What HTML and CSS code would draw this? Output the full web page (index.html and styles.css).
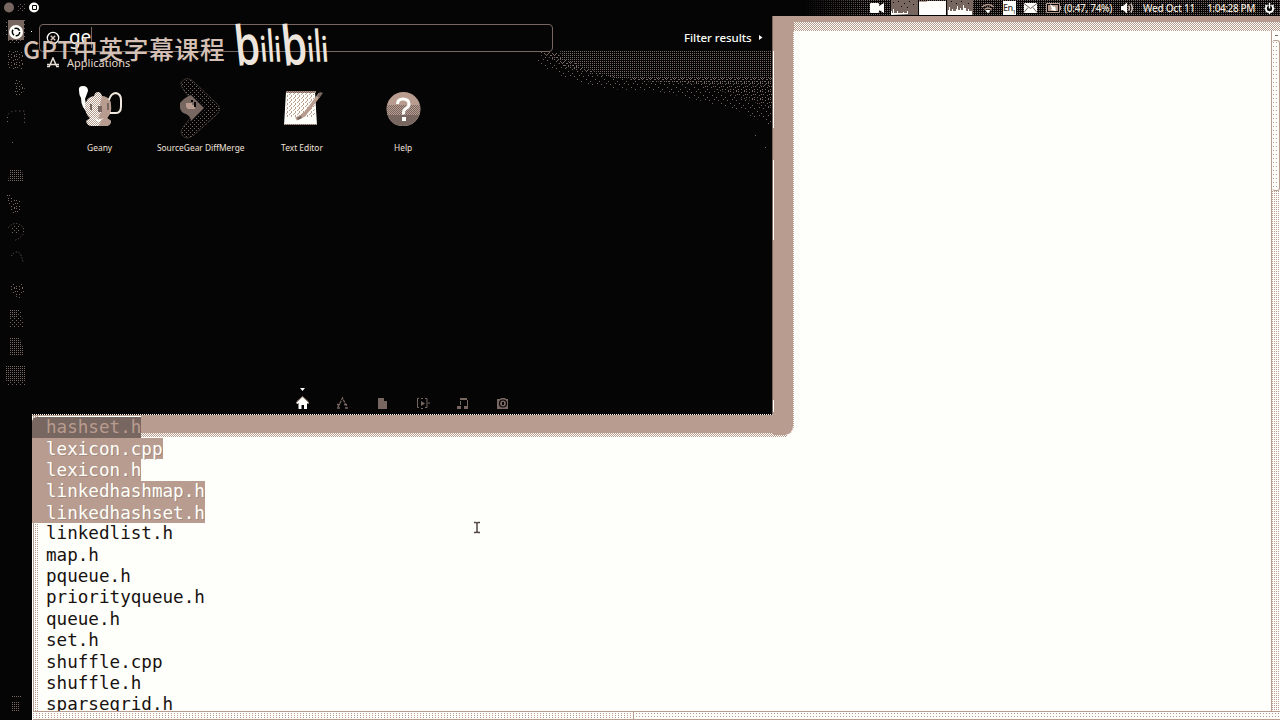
FILE: index.html
```html
<!DOCTYPE html>
<html lang="en">
<head>
<meta charset="utf-8">
<title>Desktop</title>
<link rel="stylesheet" href="styles.css">
</head>
<body>
<svg class="defs" width="0" height="0" aria-hidden="true">
  <defs>
    <pattern id="dots" width="2" height="2" patternUnits="userSpaceOnUse"><path fill="#786661" d="M0 0h1v1H0z"/></pattern>
    <pattern id="mid" width="4" height="4" patternUnits="userSpaceOnUse"><path fill="#786661" d="M0 0h1v1H0zM2 2h1v1H2z"/></pattern>
    <pattern id="mix" width="8" height="8" patternUnits="userSpaceOnUse"><path fill="#786661" d="M0 0h1v1H0zM3 1h1v1H3zM6 0h1v1H6zM1 3h1v1H1zM5 4h1v1H5zM7 3h1v1H7zM0 6h1v1H0zM3 6h1v1H3zM6 7h1v1H6z"/></pattern>
    <pattern id="sparse" width="9" height="8" patternUnits="userSpaceOnUse"><path fill="#786661" d="M0 1h1v1H0zM5 0h1v1H5zM3 4h1v1H3zM7 6h1v1H7z"/></pattern>
    <pattern id="tan" width="2" height="2" patternUnits="userSpaceOnUse"><path fill="#fefffa" d="M0 0h2v2H0z"/><path fill="#b89c8f" d="M0 0h1v1H0zM1 1h1v1H1z"/></pattern>
    <pattern id="paper" width="4" height="4" patternUnits="userSpaceOnUse"><path fill="#fefffa" d="M0 0h4v4H0z"/><path fill="#b89c8f" d="M0 0h1v1H0zM2 1h1v2H2zM1 3h1v1H1z"/></pattern>
    <pattern id="shade" width="2" height="2" patternUnits="userSpaceOnUse"><path fill="#b89c8f" d="M0 0h2v2H0z"/><path fill="#786661" d="M0 0h1v1H0zM1 1h1v1H1z"/></pattern>
  </defs>
</svg>
<div class="desktop">
  <header class="topbar">
    <svg class="win-buttons" width="44" height="16"><circle cx="9" cy="7.500" r="5" fill="#786661"/><circle cx="21.500" cy="7.500" r="4.500" fill="url(#mid)"/><circle cx="34" cy="7.500" r="5" fill="#fefffa"/><path d="M32.500 5.500h4v4h-4z" fill="none" stroke="#050505"/></svg>
    <div class="indicators">
      <svg class="camera" width="14" height="10"><path fill="#fefffa" d="M0 1q0-1 1-1h7q1 0 1 1v2l5-3v10l-5-3v2q0 1-1 1H1q-1 0-1-1z"/></svg>
      <svg class="graphs" width="83" height="16">
        <path fill="#786661" d="M0 0h27v15H0z"/><path fill="#050505" d="M2 2h1v1H2zM7 1h1v1H7zM13 3h1v1h-1zM18 1h1v1h-1zM22 4h1v1h-1zM10 6h1v1h-1zM16 7h1v1h-1z"/><path fill="#fefffa" d="M0 15v-4h1v2h1v-4h1v4h3v-2h1v2h5v-1h1v1h3v-2h1v3z"/>
        <path fill="#fefffa" d="M28 1h27v14H28z"/><path fill="#b89c8f" d="M28 1h8v1h-8z"/>
        <path fill="#786661" d="M56 0h26v15H56z"/><path fill="#050505" d="M60 1h1v1h-1zM65 3h1v1h-1zM70 1h1v1h-1zM77 3h1v1h-1z"/><path fill="#fefffa" d="M57 15v-5h1v-3h1v4h2V9h1v2h3V9h1V6h1v4h2V8h1v2h2V5h1v3h2v3h2V9h1v2h3v4z"/>
      </svg>
      <svg class="wifi" width="14" height="11"><path d="M1 4Q7-1 13 4M3.500 6.500Q7 3.500 10.500 6.500" fill="none" stroke="#b89c8f" stroke-width="1.600"/><path fill="#fefffa" d="M4.500 7.500Q7 6 9.500 7.500L7 10.500z"/></svg>
      <span class="lang">En<sub>1</sub></span>
      <svg class="mail" width="13" height="10"><path fill="#fefffa" d="M0 0h13v10H0z"/><path d="M0 .5l6.500 5 6.500-5M0 9.500l4-5M13 9.500l-4-5" fill="none" stroke="#786661"/></svg>
      <svg class="battery" width="16" height="10"><path fill="#050505" d="M0 0h14v10H0z"/><path d="M.5.500h13v9H.5zM14.500 3v4" fill="none" stroke="#b89c8f"/><path fill="#b89c8f" d="M2 2h10v6H2z"/><path fill="#fefffa" d="M4 1l4 3 1-1 1 5-5-1 1-1z"/></svg>
      <span class="power-left">(0:47, 74%)</span>
      <svg class="speaker" width="13" height="12"><path fill="#fefffa" d="M0 4h2l4-3.500v11L2 8H0z"/><path d="M7.500 3.500q2 2.500 0 5M9.800 1.500q3 4.500 0 9" fill="none" stroke="#d8c6bc" stroke-width="1.500"/></svg>
      <span class="date">Wed Oct 11</span>
      <span class="time">1:04:28 PM</span>
      <svg class="gear" width="12" height="12"><circle cx="5.500" cy="6.500" r="3.600" fill="#050505" stroke="#fefffa" stroke-width="1.800"/><path d="M5.500 3.500V2" stroke="#050505" stroke-width="4"/><path d="M5.500 1v5.500M.5 6.500H2M9 6.500h1.500M2 10l1-1M9 10L8 9M5.500 10v2M1.500 3l1 1M9.500 3l-1 1" stroke="#fefffa" stroke-width="1.400"/></svg>
    </div>
  </header>

  <div class="workspace">
    <nav class="launcher">
      <svg width="32" height="704" viewBox="0 16 32 704">
        <path fill="#786661" d="M8 20h16v20H8z"/><path fill="url(#mid)" d="M5 20h3v18H5zM24 20h2v18h-2zM8 40h14v3H8z"/>
        <circle cx="16" cy="32" r="7" fill="#fefffa"/><circle cx="16" cy="32" r="3.700" fill="none" stroke="#050505" stroke-width="1.500" stroke-dasharray="6 1.700"/><path fill="#fefffa" d="M31 31h1v1h-1z"/>
        <path fill="url(#mix)" d="M8 50h15v20H8zM15 80h4l6 9-4 6h-6z"/>
        <path d="M7.500 122v-7q3-4 8-4h9v13" fill="none" stroke="#786661" stroke-dasharray="1 3"/><path fill="#786661" d="M12 142h1v1h-1z"/>
        <path fill="url(#dots)" d="M10 170h12l2 11H8z"/>
        <path fill="url(#mix)" d="M6 194h4l3 6h8v9l-3 4h-7z"/>
        <path d="M8.500 227.500q7-8 15 0v6q-3 5-9 7" fill="none" stroke="#786661" stroke-dasharray="1 2"/><path fill="url(#mid)" d="M12 226h8v8h-8z"/>
        <path d="M11.500 256q4-7 9-2l3 9" fill="none" stroke="#786661" stroke-dasharray="1 2"/>
        <path fill="url(#mix)" d="M11 284h13v8l-5 7-8-7z"/><path fill="url(#mid)" d="M9 309h12l3 19H9z"/><path fill="url(#dots)" d="M9 309h9v9H9zM9 337h10l4 10v9H9zM6 366h20v15H6z"/><path fill="url(#mid)" d="M7 381h19v5H7z"/>
        <path d="M11 696h10v2H11zM12 702h8v10h-8z" fill="url(#dots)"/>
      </svg>
    </nav>

    <main class="terminal">
      <ul class="listing">
        <li><mark class="dim">hashset.h</mark></li>
        <li><mark>lexicon.cpp</mark></li>
        <li><mark>lexicon.h</mark></li>
        <li><mark>linkedhashmap.h</mark></li>
        <li><mark>linkedhashset.h</mark></li>
        <li>linkedlist.h</li>
        <li>map.h</li>
        <li>pqueue.h</li>
        <li>priorityqueue.h</li>
        <li>queue.h</li>
        <li>set.h</li>
        <li>shuffle.cpp</li>
        <li>shuffle.h</li>
        <li>sparsegrid.h</li>
      </ul>
      <div class="hscroll"><i></i></div>
      <div class="vscroll"><b></b><i></i></div>
    </main>

    <section class="dash">
      <svg class="glow" width="234" height="110"><path fill="url(#dots)" d="M22 0h212v27H76L45 16 26 9z"/><path fill="url(#mid)" d="M2 1h20l4 8 19 7 31 11h158v8l-60-2-60-2-44-5-40-8z"/><path fill="url(#mix)" d="M0 1h14l32 15 30 11h158v30l-30-10-24-8-30-7-42-2-40-6-38-8z"/><path fill="url(#sparse)" d="M0 3l34 13 36 8 38 6 42 2 30 7 24 8 30 10v18l-30-14-44-12-42-9-47-2-41-10L0 13z"/><path fill="#786661" d="M217 84h1v1h-1zM227 96h1v1h-1z"/></svg>
      <div class="dash-head">
        <div class="search">
          <svg width="14" height="14"><circle cx="7" cy="7" r="5.700" fill="none" stroke="#fefffa" stroke-width="1.300"/><path d="M4.800 4.800l4.400 4.400M9.200 4.800L4.800 9.200" stroke="#d8c6bc" stroke-width="1.400"/></svg>
          <span class="query">ge</span>
        </div>
        <span class="filter">Filter results</span>
        <svg class="arrow" width="4" height="5"><path fill="#fefffa" d="M0 0l3.500 2.500L0 5z"/></svg>
      </div>
      <h2 class="category"><svg width="12" height="11"><path d="M2.500 9L6 1l3.500 8M0 7.500h12M0 9.500h3M9 9.500h3" fill="none" stroke="#e8ded5" stroke-width="1.500"/></svg><span>Applications</span></h2>
      <div class="apps">
        <div class="app">
          <svg width="50" height="64" viewBox="0 0 50 64"><path fill="#fefffa" d="M4 13q-1-5 4-5t5 5l-3 8q1 8 5 11l-1 4Q6 30 6 20q-2-3-2-7z"/><path fill="url(#tan)" d="M10 28q1-9 9-10 1-4 4-4t4 4q9 1 9 9 1 8-4 13l4 3q0 5-6 5H17q-5 0-6-5l4-3q-5-4-5-12z"/><path fill="#b89c8f" d="M27 18q9 1 9 9 1 8-4 13l4 3q0 5-6 5h-7l4-6-4-2 3-6-1-8z"/><path d="M34 22q2-7 7-7 5 1 5 7v6q0 7-5 7h-6" fill="none" stroke="#f1e9e0" stroke-width="2"/><path fill="#786661" d="M15 26h2v6h-2zM23 28h4v6h-4zM32 25h2v7h-2z"/><path fill="#fefffa" d="M17 39l6 3 6-2-6 4z"/></svg>
          <span>Geany</span>
        </div>
        <div class="app">
          <svg width="50" height="64" viewBox="0 0 50 64"><path fill="url(#mid)" stroke="#786661" stroke-dasharray="1 1" d="M5 5q5-8 13-1l22 21q7 6 0 12L18 57q-10 7-13-3 1-5 13-18 5-6 0-12Q5 11 5 5z"/><path fill="#050505" d="M10 12l12 18-13 19 24-19z" opacity=".55"/><path fill="#786661" d="M4 25q5-6 11-8l13 13-13 13q0-4-5-7Q5 35 4 30z"/><path fill="#b89c8f" d="M10 25h6v2h3v4h-7l-2-2z"/><path fill="#050505" d="M18 24h2v5h-2zM15 22h2v2h-2z"/></svg>
          <span>SourceGear DiffMerge</span>
        </div>
        <div class="app">
          <svg width="50" height="64" viewBox="0 0 50 64"><path fill="#fefffa" d="M9 14h29l2 33H7z"/><path fill="url(#paper)" d="M10 15h27l1 24H9z"/><path fill="url(#shade)" d="M9 13h30v2H9zM7 46h33v1H7z"/><path d="M19 41l8-4 7-9 9-12" fill="none" stroke="#b89c8f" stroke-width="3.500"/><path fill="#786661" d="M20 40l4-2 1 2-4 2zM40 18l3-4 3 1-4 5z"/></svg>
          <span>Text Editor</span>
        </div>
        <div class="app">
          <svg width="50" height="64" viewBox="0 0 50 64"><circle cx="25.500" cy="31" r="17" fill="#b89c8f"/><path fill="url(#shade)" d="M9 27h33v8q-4 13-17 13T9 35z"/><path fill="#786661" d="M10 37h31q-4 11-16 11T10 37z"/><path fill="none" stroke="#fefffa" stroke-width="3" d="M19.500 26q0-5 5.500-5t6 5q0 3-3 4.500t-2.500 6"/><path fill="#fefffa" d="M24 39h4v4h-4z"/></svg>
          <span>Help</span>
        </div>
      </div>
      <div class="lenses">
        <svg width="16" height="24"><path fill="#fefffa" d="M6 0h5L8.500 3zM2 15l6.500-6 6.500 6-1 1-1-1v6H10v-4H7.500v4H4.500v-6l-1 1z"/><path d="M2.500 14l6-5.500 6 5.500" fill="none" stroke="#b89c8f"/></svg>
        <svg width="16" height="24"><path d="M4 19l4.500-9L13 19M3 16.500h4M10 16.500h4M3 20h3M11 20h3" fill="none" stroke="#786661" stroke-width="1.300" stroke-dasharray="3 1"/></svg>
        <svg width="16" height="24"><path fill="#786661" d="M4 10h6v3h3v8H4z"/></svg>
        <svg width="16" height="24"><path d="M5 10.500H3.500v9H5M7 10.500h2M7 20.500h2M11 10.500h2v9h-2M15 14v2" fill="none" stroke="#786661"/><path fill="#786661" d="M7 13l4 2.500L7 18z"/></svg>
        <svg width="16" height="24"><path fill="#786661" d="M6 10h7v2H6zM6 13h1v4H6zM13 12h1v7h-1zM3 18h4v3H3zM10 18h4v3h-4z"/></svg>
        <svg width="16" height="24"><path fill="#786661" d="M3 11h3l1-1h4l1 1h2v10H3z"/><circle cx="9" cy="15.500" r="3.500" fill="none" stroke="#050505" stroke-width="1.200"/><path fill="#050505" d="M8 14h2v3H8z"/></svg>
      </div>
      <i class="edge top"></i><i class="edge middle"></i><i class="edge bottom"></i>
    </section>
  </div>

  <svg class="cursor" width="8" height="13"><path d="M1 1.500h2l1 1 1-1h2M4 2.500v8M1 11.500h2l1-1 1 1h2" fill="none" stroke="#534642" stroke-width="1.500"/></svg>
  <div class="watermark">
    <span>GPT中英字幕课程</span>
    <svg class="logo" width="98" height="48" viewBox="0 0 98 48"><g class="brand">
      <text transform="translate(5.500 44) rotate(-6) scale(.74 1)" font-size="55">b</text>
      <text transform="translate(30 40) rotate(-5) scale(.75 1)" font-size="35">i</text>
      <text transform="translate(37 40) rotate(-4) scale(.6 1)" font-size="44">l</text>
      <text transform="translate(44 40) rotate(-4) scale(.75 1)" font-size="35">i</text>
      <text transform="translate(52.500 44) rotate(-6) scale(.74 1)" font-size="55">b</text>
      <text transform="translate(77 40) rotate(-5) scale(.75 1)" font-size="35">i</text>
      <text transform="translate(84 40) rotate(-4) scale(.6 1)" font-size="44">l</text>
      <text transform="translate(91 40) rotate(-4) scale(.75 1)" font-size="35">i</text>
    </g></svg>
  </div>
</div>
</body>
</html>
```
FILE: styles.css
```css
:root {
  --ink: #050505; --gray: #786661; --tan: #b89c8f; --white: #fefffa;
  --tan-dot: conic-gradient(from 270deg at 1px 1px, var(--tan) 90deg, transparent 0);
  --gray-dot: conic-gradient(from 270deg at 1px 1px, var(--gray) 90deg, transparent 0);
  --checker: repeating-conic-gradient(var(--tan) 0 25%, var(--white) 0 50%);
}
* { box-sizing: border-box; }
body { margin: 0; overflow: hidden; background: var(--white); font-family: "Noto Sans", sans-serif; }
svg { display: block; flex: none; }
.defs { position: absolute; }
.desktop { position: relative; width: 1280px; height: 720px; overflow: hidden; }

.topbar { display: flex; justify-content: space-between; height: 16px; background: var(--ink); color: #efe6de; }
.indicators {
  display: flex; align-items: center; width: 495px; padding-left: 85px; font-size: 10px; font-weight: 500; line-height: 16px; white-space: nowrap;
  background: linear-gradient(90deg, var(--ink) 20px, transparent 85px), var(--gray-dot) 0 0 / 2px 2px, var(--ink);
}
.graphs { margin-left: 7px; }
.wifi { margin-left: 7px; }
.lang { width: 13px; height: 14px; margin-left: 8px; background: var(--white); color: #332b28; font-size: 9px; line-height: 14px; letter-spacing: -.5px; }
.lang sub { font-size: 5px; line-height: 0; }
.mail { margin-left: 8px; }
.battery { margin-left: 9px; }
.power-left { width: 49px; margin-left: 2px; letter-spacing: -.3px; }
.speaker { margin-left: 8px; }
.date { width: 54px; margin-left: 9px; letter-spacing: -.25px; }
.time { width: 50px; margin-left: 10px; letter-spacing: -.4px; }
.gear { margin-left: 7px; }

.workspace { position: relative; display: flex; height: 704px; }
.launcher { width: 32px; background: var(--ink); }
.terminal {
  position: relative; flex: 1; overflow: hidden; border-top: 6px solid var(--tan);
  background: linear-gradient(var(--tan), var(--tan)) 1px 0 / 1px 100% no-repeat, var(--tan-dot) 3px 0 / 2px 2px, var(--white);
}
.terminal::before { content: ""; display: block; height: 9px; background: var(--checker) 0 0 / 2px 2px; }
.listing {
  height: 680px; margin: 0 9px 0 0; padding: 385.6px 0 0 6px; list-style: none; overflow: hidden;
  background: linear-gradient(var(--white), var(--white)) 6px 0 no-repeat;
  font: 17.6px/21.36px "DejaVu Sans Mono", monospace; color: #17110f;
}
.listing li { height: 21.36px; margin-left: -6px; padding-left: 14px; }
.listing mark { display: inline-block; height: 21.36px; margin-left: -14px; padding: .6px 0 0 14px; background: var(--tan); color: var(--white); text-shadow: 1px 1px 0 rgba(120, 102, 97, .35); }
.listing .dim { border-top-left-radius: 5px; background: var(--gray); color: var(--tan); text-shadow: none; }
.hscroll { position: absolute; left: 1px; right: 0; bottom: 0; height: 9px; border-top: 1px solid var(--tan); border-bottom: 1px solid var(--tan); background: var(--tan-dot) 0 1px / 3px 3px, var(--white); }
.hscroll i { display: block; width: 601px; height: 7px; border-right: 1px solid var(--tan); background: var(--tan-dot) 0 3px / 3px 2px, linear-gradient(var(--white), var(--white)); }
.vscroll { position: absolute; top: 9px; right: 0; bottom: 9px; width: 9px; border-left: 1px solid var(--tan); background: var(--tan-dot) 2px 0 / 2px 2px, var(--white); }
.vscroll b { display: block; height: 9px; background: linear-gradient(var(--gray), var(--gray)) 3px 4px / 3px 1px no-repeat, var(--white); }
.vscroll i { display: block; height: 151px; border: 1px solid var(--tan); border-left-color: var(--white); border-radius: 3px; background: var(--tan-dot) 3px 1px / 3px 4px, var(--white); }
.terminal::after {
  content: ""; position: absolute; left: 109px; top: 393px; width: 646px; height: 22px;
  background: linear-gradient(var(--tan), var(--tan)) 0 0 / 100% 18px no-repeat, var(--checker) 0 0 / 2px 2px;
}

.dash {
  position: absolute; left: 32px; top: 0; width: 741px; height: 399px; background: var(--ink); color: var(--white);
  border-right: 1px solid var(--gray); border-bottom: 1px dotted var(--white); box-shadow: 0 1px var(--tan);
}
.dash::after {
  content: ""; position: absolute; left: 741px; top: 0; width: 20px; height: 419px;
  background: var(--tan) padding-box;
  border-radius: 6px 0 9px 0; border-right: 1px dotted var(--tan);
}
.glow { position: absolute; left: 506px; top: 35px; }
.dash-head { display: flex; align-items: center; height: 43px; padding: 0 0 0 7px; }
.search { position: relative; display: flex; align-items: center; width: 514px; height: 28px; padding-left: 6px; border: 1px solid var(--gray); border-radius: 4px; }
.query { margin: -1px 0 0 9px; border-right: 1px solid var(--gray); font-size: 19px; line-height: 21px; letter-spacing: -.3px; }
.filter { margin: -1px 0 0 131px; font-size: 11.5px; font-weight: 500; line-height: 15px; letter-spacing: -.05px; }
.arrow { margin-left: 7px; }
.category { display: flex; align-items: center; gap: 8px; height: 12px; margin: -3px 0 1px; padding-left: 15px; font-size: 11px; font-weight: 400; color: #e3d6cc; }
.apps { display: flex; padding: 9px 0 0 17px; }
.app { display: flex; flex-direction: column; align-items: center; width: 101.2px; font-size: 8.4px; line-height: 12px; white-space: nowrap; color: #efe2d9; }
.lenses { display: flex; gap: 24px; padding: 234px 0 0 262px; }
.edge { position: absolute; z-index: 2; left: 741px; width: 1px; background: var(--white); }
.edge.top { top: 35px; height: 77px; }
.edge.middle { top: 144px; height: 80px; }
.edge.bottom { top: 384px; height: 12px; }

.cursor { position: absolute; left: 473px; top: 521px; }
.watermark { position: absolute; left: 23px; top: 22px; display: flex; color: #d4c0b5; }
.watermark span { width: 208px; padding-top: 8px; font: 500 24.6px/36px "Noto Sans CJK SC", sans-serif; letter-spacing: .8px; white-space: nowrap; }
.logo { overflow: visible; }
.brand { font-family: "Open Sans", sans-serif; font-weight: 600; fill: #eee5dc; }
```
